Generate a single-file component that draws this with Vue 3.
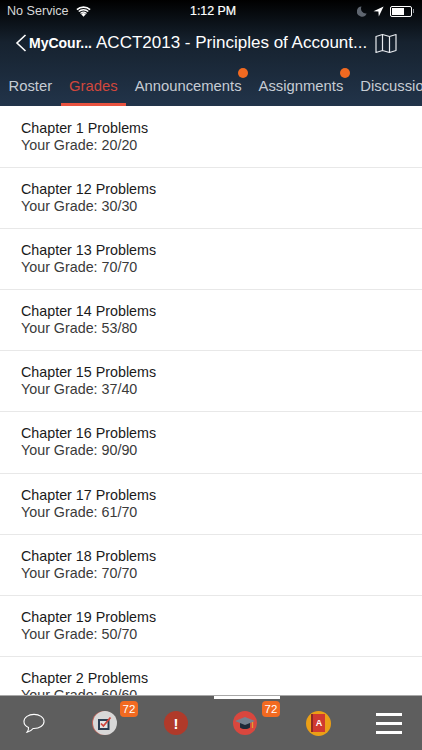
<template>
  <div class="screen">
    <header class="top">
      <div class="status">
        <div class="status-left">
          <span>No Service</span>
          <svg class="wifi" width="15" height="11" viewBox="0 0 17 12">
            <path d="M8.5 12 L5.9 9 A3.9 3.9 0 0 1 11.1 9 Z" fill="#fff" />
            <path d="M4.6 7.6 A6 6 0 0 1 12.4 7.6 L11.4 8.7 A4.6 4.6 0 0 0 5.6 8.7 Z" fill="#fff" />
            <path d="M2.5 5.4 A9 9 0 0 1 14.5 5.4 L13.3 6.6 A7.3 7.3 0 0 0 3.7 6.6 Z" fill="#fff" />
            <path d="M.4 3.2 A12 12 0 0 1 16.6 3.2 L15.3 4.5 A10.2 10.2 0 0 0 1.7 4.5 Z" fill="#fff" />
          </svg>
        </div>
        <span class="clock">1:12 PM</span>
        <div class="status-right">
          <svg width="10" height="11" viewBox="0 0 11 12">
            <path d="M5 .5 A5.6 5.6 0 1 0 10.6 8.2 A5.4 5.4 0 0 1 5 .5 Z" fill="#5f6670" />
          </svg>
          <svg width="11" height="11" viewBox="0 0 11 11">
            <path d="M10.6.4 L.5 5.2 L5.4 5.6 L5.8 10.6 Z" fill="#fff" />
          </svg>
          <div class="battery"><i></i></div>
          <b class="nub"></b>
        </div>
      </div>

      <div class="nav">
        <svg class="chev" width="12" height="18" viewBox="0 0 12 18">
          <path d="M10.5 1 L2 9 L10.5 17" fill="none" stroke="#fff" stroke-width="1.6" />
        </svg>
        <span class="back">MyCour...</span>
        <span class="title">ACCT2013 - Principles of Account...</span>
        <svg class="map" width="22" height="21" viewBox="0 0 22 20">
          <path d="M1 3 L7.5 1 L14.5 3 L21 1 V17 L14.5 19 L7.5 17 L1 19 Z M7.5 1 V17 M14.5 3 V19" fill="none" stroke="#e8ebef" stroke-width="1.2" stroke-linejoin="round" />
        </svg>
      </div>

      <nav class="tabs">
        <div v-for="t in tabs" :key="t.name" class="tab" :class="{ on: t.name === 'Grades' }">
          {{ t.name }}
          <i v-if="t.dot" class="dot"></i>
        </div>
      </nav>
    </header>

    <main class="list">
      <div v-for="g in grades" :key="g.name" class="row">
        <div class="name">{{ g.name }}</div>
        <div class="grade">Your Grade: {{ g.score }}</div>
      </div>
    </main>

    <footer class="bar">
      <i class="marker"></i>
      <div class="slot">
        <svg width="24" height="21" viewBox="0 0 24 23">
          <path d="M12 1.5 C6 1.5 1 4.8 1 9.3 C1 12.2 3 14.5 6 15.8 C6.2 17.5 5.6 19.4 4.4 21 C7.4 20.4 9.6 18.9 11 17 L12 17 C18 17 23 13.8 23 9.3 C23 4.8 18 1.5 12 1.5 Z" fill="none" stroke="#fff" stroke-width="1.2" />
        </svg>
      </div>
      <div class="slot">
        <div class="ico task">
          <svg width="20" height="18" viewBox="0 0 20 18">
            <rect x="3" y="5" width="11.5" height="11" fill="#2c3e52" />
            <rect x="5" y="7" width="7.5" height="7" fill="#e4e4e4" />
            <path d="M6 9.5 L8.4 12 L15.5 3.5" fill="none" stroke="#d0453c" stroke-width="1.8" />
          </svg>
        </div>
        <span class="count">72</span>
      </div>
      <div class="slot">
        <div class="ico alert">!</div>
      </div>
      <div class="slot">
        <div class="ico cap">
          <svg width="22" height="16" viewBox="0 0 22 16">
            <path d="M6 7.5 V12.5 C8.5 14.5 13.5 14.5 16 12.5 V7.5 Z" fill="#1f2a38" />
            <path d="M1 6 L11 2 L21 6 L11 10 Z" fill="#75828f" />
            <path d="M18.5 7 V13" stroke="#e0a030" stroke-width="1.3" />
          </svg>
        </div>
        <span class="count">72</span>
      </div>
      <div class="slot">
        <div class="ico book">
          <div class="cover">A</div>
        </div>
      </div>
      <div class="slot">
        <div class="menu"><i></i><i></i><i></i></div>
      </div>
    </footer>
  </div>
</template>

<script setup>
const tabs = [
  { name: 'Roster' },
  { name: 'Grades' },
  { name: 'Announcements', dot: true },
  { name: 'Assignments', dot: true },
  { name: 'Discussions' },
]

const grades = [
  { name: 'Chapter 1 Problems', score: '20/20' },
  { name: 'Chapter 12 Problems', score: '30/30' },
  { name: 'Chapter 13 Problems', score: '70/70' },
  { name: 'Chapter 14 Problems', score: '53/80' },
  { name: 'Chapter 15 Problems', score: '37/40' },
  { name: 'Chapter 16 Problems', score: '90/90' },
  { name: 'Chapter 17 Problems', score: '61/70' },
  { name: 'Chapter 18 Problems', score: '70/70' },
  { name: 'Chapter 19 Problems', score: '50/70' },
  { name: 'Chapter 2 Problems', score: '60/60' },
]
</script>

<style>
html,
body {
  margin: 0;
  background: #fff;
}
</style>

<style scoped>
.screen {
  width: 422px;
  height: 750px;
  display: flex;
  flex-direction: column;
  overflow: hidden;
  font-family: "Liberation Sans", Arial, sans-serif;
  background: #fff;
}

.top {
  height: 106px;
  flex: none;
  color: #fff;
  background: linear-gradient(#000 0%, #16222f 40%, #22344a 100%);
}

.status {
  height: 22px;
  padding: 0 7px;
  display: flex;
  align-items: center;
  justify-content: space-between;
  font-size: 12.6px;
  position: relative;
}

.status-left {
  display: flex;
  align-items: center;
  gap: 7px;
  color: #d8d8d8;
}

.clock {
  position: absolute;
  left: 190px;
  font-size: 12.4px;
  -webkit-text-stroke: 0.2px #fff;
}

.status-right {
  display: flex;
  align-items: center;
  gap: 6px;
}

.battery {
  width: 22px;
  height: 11px;
  box-sizing: border-box;
  border: 1px solid #fff;
  border-radius: 2px;
  padding: 1px;
}

.battery i {
  display: block;
  width: 12px;
  height: 100%;
  background: #fff;
}

.nub {
  width: 1px;
  height: 4px;
  margin-left: -5px;
  margin-right: 1px;
  background: #8a8f96;
}

.nav {
  height: 42px;
  display: flex;
  align-items: center;
  padding-left: 15px;
}

.chev {
  margin-right: 2px;
}

.back {
  font-size: 14px;
  font-weight: 700;
  margin-right: 4px;
}

.title {
  font-size: 17px;
  white-space: nowrap;
}

.map {
  margin-left: 8px;
}

.tabs {
  height: 42px;
  display: flex;
  box-sizing: border-box;
  overflow: hidden;
}

.tab {
  position: relative;
  flex: none;
  padding: 4px 8.5px 0;
  line-height: 36px;
  font-size: 14.8px;
  color: #c6ccd4;
  box-sizing: border-box;
}

.tab.on {
  color: #d0473c;
  border-bottom: 3px solid #e8523f;
}

.dot {
  position: absolute;
  top: 4px;
  right: 2px;
  width: 10px;
  height: 10px;
  border-radius: 50%;
  background: #f26a21;
}

.list {
  flex: 1;
  min-height: 0;
  overflow: hidden;
  padding-top: 1px;
}

.row {
  height: 61.1px;
  box-sizing: border-box;
  padding: 13px 21px 0;
  border-bottom: 1px solid #e8e8e8;
  font-size: 14.3px;
  line-height: 17px;
}

.name {
  color: #1a1a1a;
}

.grade {
  color: #3a3a3a;
}

.bar {
  position: relative;
  height: 55px;
  flex: none;
  display: grid;
  grid-template-columns: 67px 76px 66px 72px 74px 67px;
  background: #5e5e5e;
  border-top: 1px solid #a8a8a8;
  box-sizing: border-box;
}

.marker {
  position: absolute;
  left: 214px;
  top: 0;
  width: 66px;
  height: 3px;
  background: #fff;
}

.slot {
  position: relative;
  display: flex;
  align-items: center;
  justify-content: center;
}

.ico {
  width: 24px;
  height: 24px;
  border-radius: 50%;
  display: flex;
  align-items: center;
  justify-content: center;
}

.task {
  background: #d8d8d8;
  box-shadow: -1px 0 0 #c0655c;
}

.alert {
  background: #b03a2a;
  color: #fff;
  font-weight: 700;
  font-size: 15px;
}

.cap {
  background: #d9473e;
}

.book {
  background: #eb9f16;
  width: 25px;
  height: 25px;
}

.cover {
  width: 14px;
  height: 18px;
  background: #d03a30;
  color: #fff;
  font-size: 9px;
  font-weight: 700;
  line-height: 18px;
  text-align: center;
  border-left: 2px solid #8e2a22;
  box-sizing: border-box;
}

.count {
  position: absolute;
  top: 5px;
  left: 53px;
  width: 18px;
  height: 16px;
  border-radius: 4px;
  background: #f26a21;
  color: #fff;
  font-size: 11.5px;
  line-height: 16px;
  text-align: center;
}

.menu {
  display: flex;
  flex-direction: column;
  gap: 6px;
}

.menu i {
  display: block;
  width: 26px;
  height: 3px;
  background: #fff;
}
</style>
